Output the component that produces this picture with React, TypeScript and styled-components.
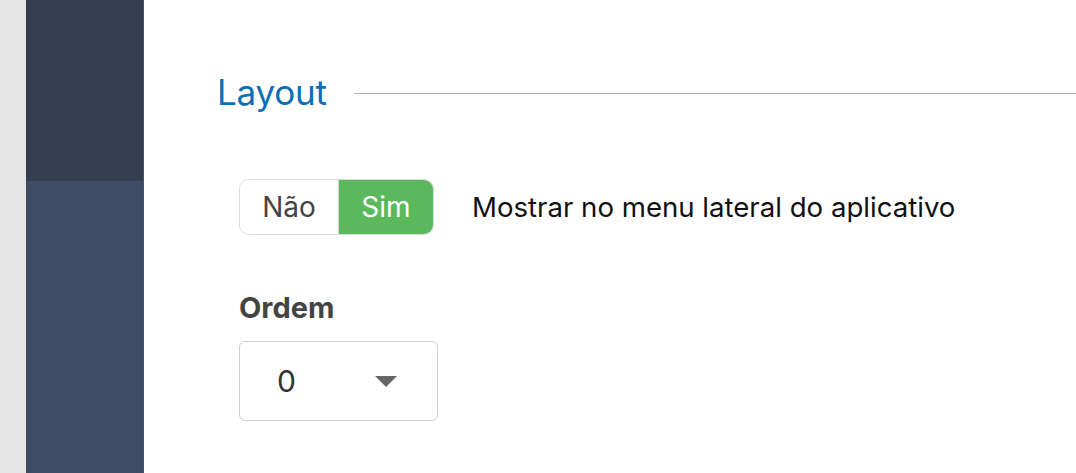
import React from "react"
import styled, { createGlobalStyle } from "styled-components"

const GlobalStyle = createGlobalStyle`
  html, body {
    margin: 0;
    padding: 0;
    background: #fff;
    font-family: Inter, "Noto Sans", sans-serif;
  }
`

const Page = styled.div`
  display: flex;
  height: 473px;
  overflow: hidden;
`

const Gutter = styled.div`
  width: 26px;
  background: #e5e5e5;
`

const Sidebar = styled.div`
  width: 117px;
  display: flex;
  flex-direction: column;
  background: #3e4d64;
  border-right: 1px solid #46546b;
`

const SidebarHeader = styled.div`
  height: 181px;
  background: #333e50;
`

const Content = styled.main`
  flex: 1;
  padding: 70px 0 0 73px;
`

const SectionTitle = styled.div`
  display: flex;
  align-items: center;
  gap: 27px;
`

const TitleText = styled.h2`
  margin: 0;
  font-size: 35px;
  font-weight: 400;
  line-height: 44px;
  color: #0a6fb7;
  letter-spacing: -0.2px;
`

const TitleRule = styled.div`
  flex: 1;
  height: 1px;
  margin-top: 2px;
  background: #b3b3b3;
`

const Body = styled.div`
  padding: 65px 0 0 22px;
`

const ToggleRow = styled.div`
  display: flex;
  align-items: center;
  gap: 38px;
`

const Toggle = styled.div`
  display: flex;
  height: 56px;
  border: 1px solid #dcdcdc;
  border-radius: 10px;
  overflow: hidden;
  box-sizing: border-box;
`

const ToggleOption = styled.button<{ active?: boolean; w: number }>`
  width: ${(p) => p.w}px;
  border: none;
  margin: 0;
  padding: 0;
  font-family: inherit;
  font-size: 28px;
  color: ${(p) => (p.active ? "#fff" : "#444")};
  background: ${(p) => (p.active ? "#5cb85c" : "#fff")};
  border-left: ${(p) => (p.active ? "1px solid #d8d8d8" : "none")};
`

const ToggleLabel = styled.span`
  font-size: 27.6px;
  color: #111;
`

const Field = styled.div`
  margin-top: 55px;
`

const FieldLabel = styled.label`
  display: block;
  font-size: 29px;
  font-weight: 700;
  color: #444;
  line-height: 36px;
`

const Select = styled.div`
  margin-top: 15px;
  width: 199px;
  height: 80px;
  box-sizing: border-box;
  border: 1px solid #cfcfcf;
  border-radius: 6px;
  display: flex;
  align-items: center;
  padding: 0 40px 0 37px;
  justify-content: space-between;
`

const SelectValue = styled.span`
  font-size: 30px;
  color: #333;
`

const Caret = styled.span`
  width: 0;
  height: 0;
  border-left: 11px solid transparent;
  border-right: 11px solid transparent;
  border-top: 11px solid #666;
`

export default function App() {
  return (
    <>
      <GlobalStyle />
      <Page>
        <Gutter />
        <Sidebar>
          <SidebarHeader />
        </Sidebar>
        <Content>
          <SectionTitle>
            <TitleText>Layout</TitleText>
            <TitleRule />
          </SectionTitle>
          <Body>
            <ToggleRow>
              <Toggle>
                <ToggleOption w={98}>Não</ToggleOption>
                <ToggleOption w={95} active>
                  Sim
                </ToggleOption>
              </Toggle>
              <ToggleLabel>Mostrar no menu lateral do aplicativo</ToggleLabel>
            </ToggleRow>
            <Field>
              <FieldLabel>Ordem</FieldLabel>
              <Select>
                <SelectValue>0</SelectValue>
                <Caret />
              </Select>
            </Field>
          </Body>
        </Content>
      </Page>
    </>
  )
}
